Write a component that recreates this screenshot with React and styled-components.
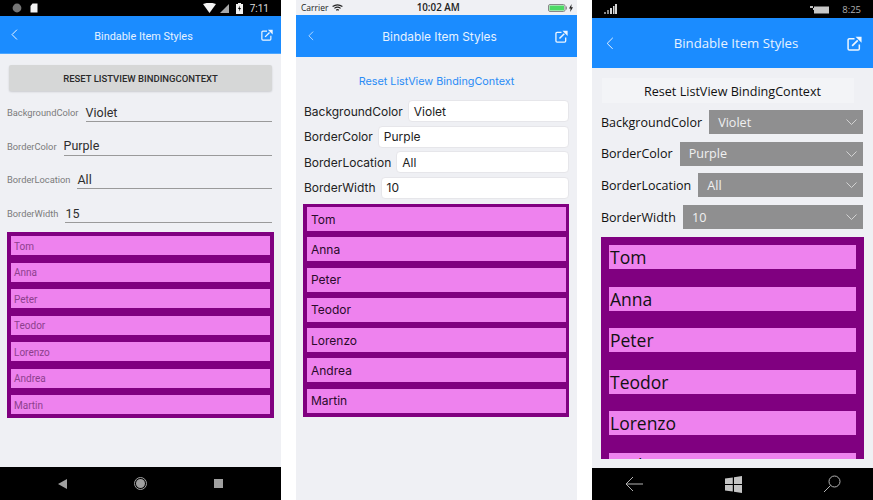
import styled, { createGlobalStyle } from 'styled-components';

const names = ['Tom', 'Anna', 'Peter', 'Teodor', 'Lorenzo', 'Andrea', 'Martin'];

const GlobalStyle = createGlobalStyle`
    html, body {
        margin: 0;
        padding: 0;
        background: #fff;
        overflow: hidden;
    }
`

const BackIcon = ({ size, weight }) => (
    <svg width={size} height={size * 1.6} viewBox="0 0 10 16" fill="none" stroke="#f0f7ff" strokeWidth={weight}>
        <path d="M8.5 1 L1.5 8 L8.5 15" />
    </svg>
);

const ShareIcon = ({ size }) => (
    <svg width={size} height={size} viewBox="0 0 14 14" fill="none">
        <path d="M7 2.5 H2.2 A1.2 1.2 0 0 0 1 3.7 V11.8 A1.2 1.2 0 0 0 2.2 13 H10.3 A1.2 1.2 0 0 0 11.5 11.8 V8" stroke="#eef6ff" strokeWidth="1.4" />
        <path d="M4.8 9.2 L10 4" stroke="#eef6ff" strokeWidth="1.6" />
        <path d="M8 .8 H13.6 V6.4 Z" fill="#eef6ff" />
    </svg>
);

const Chevron = () => (
    <svg width="11" height="6" viewBox="0 0 11 6" fill="none" stroke="#d2d2d2" strokeWidth="1">
        <path d="M.5 .5 L5.5 5.5 L10.5 .5" />
    </svg>
);

const AndroidStatus = () => (
    <StatusBar height={16} background="#000" color="#dcdcdc" size={9.5} pad="0 12px">
        <StatusGroup gap={8}>
            <svg width="10" height="10" viewBox="0 0 10 10"><circle cx="5" cy="5" r="4.4" fill="#757575" /></svg>
            <svg width="8" height="10" viewBox="0 0 8 10"><path d="M2.5 .5 H7.5 V9.5 H.5 V3 Z" fill="#f2f2f2" /></svg>
        </StatusGroup>
        <StatusGroup gap={4}>
            <svg width="13" height="10" viewBox="0 0 13 10"><path d="M0 1 Q6.5 -1.5 13 1 L6.5 10 Z" fill="#f4f4f4" /></svg>
            <svg width="9" height="9" viewBox="0 0 9 9"><path d="M9 0 V9 H0 Z" fill="#a8a8a8" /></svg>
            <BatteryIcon width="7" height="11" viewBox="0 0 7 11">
                <path d="M2 0 H5 V1 H7 V11 H0 V1 H2 Z" fill="#f2f2f2" />
                <path d="M4 2.5 L2 6 H3.4 L3 8.5 L5 5 H3.6 Z" fill="#000" />
            </BatteryIcon>
            <StatusTime>7:11</StatusTime>
        </StatusGroup>
    </StatusBar>
);

const IosStatus = () => (
    <StatusBar height={15} background="#eff0f4" color="#222" size={8.5} pad="0 4px 0 5px">
        <StatusGroup gap={4}>
            Carrier
            <svg width="11" height="8" viewBox="0 0 11 8" fill="none" stroke="#222" strokeWidth="1.2">
                <path d="M.6 2.6 Q5.5 -1 10.4 2.6" />
                <path d="M2.4 4.4 Q5.5 2 8.6 4.4" />
                <path d="M4.2 6.2 Q5.5 5.2 6.8 6.2" />
            </svg>
        </StatusGroup>
        <IosClock>10:02 AM</IosClock>
        <StatusGroup gap={2}>
            <svg width="19" height="8" viewBox="0 0 19 8">
                <rect x=".5" y=".5" width="16.5" height="7" rx="1.5" fill="none" stroke="#888" />
                <rect x="1.5" y="1.5" width="14.5" height="5" fill="#4cd964" />
                <rect x="17.7" y="2.5" width="1.2" height="3" fill="#888" />
            </svg>
            <svg width="4" height="8" viewBox="0 0 4 8"><path d="M2.6 0 L0 4.5 H1.6 L1.2 8 L4 3.3 H2.3 Z" fill="#222" /></svg>
        </StatusGroup>
    </StatusBar>
);

const WinStatus = () => (
    <StatusBar height={18} background="#000" color="#b0b0b0" size={9.5} pad="0 12px">
        <svg width="13" height="10" viewBox="0 0 13 10">
            <path d="M0 8 H2 V10 H0 Z M3 6 H5 V10 H3 Z" fill="#888" />
            <path d="M6 4 H8 V10 H6 Z M9 2 H10.5 V10 H9 Z M11 0 H13 V10 H11 Z" fill="#d8d8d8" />
        </svg>
        <StatusGroup gap={13}>
            <svg width="19" height="9" viewBox="0 0 19 9">
                <path d="M0 1 H3 V3 H5 V5 H3 V3 H0 Z" fill="#bdbdbd" />
                <rect x="4" y="1.5" width="15" height="7" fill="#c8c8c8" />
            </svg>
            8:25
        </StatusGroup>
    </StatusBar>
);

const ListRows = ({ kind }) => (
    <ListBox kind={kind}>
        {names.map(name => <ListRow key={name} kind={kind}>{name}</ListRow>)}
    </ListBox>
);

const AndroidPhone = () => (
    <Phone>
        <AndroidStatus />
        <Header height={38} kind="android">
            <BackIcon size={7} weight={1.4} />
            <Title kind="android">Bindable Item Styles</Title>
            <ShareIcon size={12} />
        </Header>
        <Body>
            <RaisedButton>RESET LISTVIEW BINDINGCONTEXT</RaisedButton>
            <AndroidForm>
                {[['BackgroundColor', 'Violet'], ['BorderColor', 'Purple'], ['BorderLocation', 'All'], ['BorderWidth', '15']].map(([label, value]) => (
                    <AndroidRow key={label}>
                        <AndroidLabel>{label}</AndroidLabel>
                        <AndroidValue>{value}</AndroidValue>
                    </AndroidRow>
                ))}
            </AndroidForm>
            <ListRows kind="android" />
        </Body>
        <NavBar height={33} gap={67}>
            <svg width="9" height="10" viewBox="0 0 9 10"><path d="M9 0 V10 L0 5 Z" fill="#a0a0a0" /></svg>
            <svg width="13" height="13" viewBox="0 0 13 13">
                <circle cx="6.5" cy="6.5" r="6" fill="none" stroke="#a0a0a0" />
                <circle cx="6.5" cy="6.5" r="4.5" fill="#a0a0a0" />
            </svg>
            <svg width="9" height="9" viewBox="0 0 9 9"><rect width="9" height="9" fill="#a0a0a0" /></svg>
        </NavBar>
    </Phone>
);

const IosPhone = () => (
    <Phone>
        <IosStatus />
        <Header height={42} kind="ios">
            <BackIcon size={6} weight={1.2} />
            <Title kind="ios">Bindable Item Styles</Title>
            <ShareIcon size={13} />
        </Header>
        <Body>
            <LinkButton>Reset ListView BindingContext</LinkButton>
            <IosForm>
                {[['BackgroundColor', 'Violet'], ['BorderColor', 'Purple'], ['BorderLocation', 'All'], ['BorderWidth', '10']].map(([label, value]) => (
                    <IosRow key={label}>
                        <IosLabel>{label}</IosLabel>
                        <IosField>{value}</IosField>
                    </IosRow>
                ))}
            </IosForm>
            <ListRows kind="ios" />
        </Body>
    </Phone>
);

const WinPhone = () => (
    <Phone>
        <WinStatus />
        <Header height={50} kind="win">
            <BackIcon size={8} weight={1.2} />
            <Title kind="win">Bindable Item Styles</Title>
            <ShareIcon size={15} />
        </Header>
        <Body>
            <FlatButton>Reset ListView BindingContext</FlatButton>
            <WinForm>
                {[['BackgroundColor', 'Violet'], ['BorderColor', 'Purple'], ['BorderLocation', 'All'], ['BorderWidth', '10']].map(([label, value]) => (
                    <WinRow key={label}>
                        <WinLabel>{label}</WinLabel>
                        <WinSelect>
                            {value}
                            <Chevron />
                        </WinSelect>
                    </WinRow>
                ))}
            </WinForm>
            <ListRows kind="win" />
        </Body>
        <NavBar height={32} gap={81}>
            <svg width="19" height="16" viewBox="0 0 19 16" fill="none" stroke="#b4b4b4" strokeWidth="1">
                <path d="M18 8 H1 M8 1 L1 8 L8 15" />
            </svg>
            <svg width="17" height="17" viewBox="0 0 17 17">
                <path d="M0 2.6 L7.8 1.4 V8 H0 Z M9 1.2 L17 0 V8 H9 Z M0 9 H7.8 V15.6 L0 14.4 Z M9 9 H17 V17 L9 15.8 Z" fill="#c4c4c4" />
            </svg>
            <svg width="18" height="18" viewBox="0 0 18 18" fill="none" stroke="#b4b4b4" strokeWidth="1">
                <circle cx="11.5" cy="6.5" r="5.5" />
                <path d="M7.5 10.5 L1 17" />
            </svg>
        </NavBar>
    </Phone>
);

const App = () => {
    return (
        <Wrapper>
            <GlobalStyle />
            <AndroidPhone />
            <IosPhone />
            <WinPhone />
        </Wrapper>
    )
}

const Wrapper = styled.div`
    width: 873px;
    height: 500px;
    display: flex;
    gap: 15px;
    background: #fff;
    overflow: hidden;
`

const Phone = styled.div`
    width: 281px;
    height: 500px;
    display: flex;
    flex-direction: column;
    background: #eff0f4;
`

const StatusBar = styled.div`
    height: ${props => props.height}px;
    flex: none;
    display: flex;
    align-items: center;
    justify-content: space-between;
    padding: ${props => props.pad};
    background: ${props => props.background};
    color: ${props => props.color};
    font: ${props => props.size}px "Open Sans", sans-serif;
`

const StatusGroup = styled.div`
    display: flex;
    align-items: center;
    gap: ${props => props.gap}px;
`

const BatteryIcon = styled.svg`
    margin-left: 3px;
`

const StatusTime = styled.span`
    margin-left: 3px;
    font: 10px Roboto, sans-serif;
`

const IosClock = styled.span`
    font-size: 9.8px;
    font-weight: 600;
    margin-left: -15px;
`

const headerPad = {
    android: { pad: '0 8px 0 11px', shift: 8, drop: 3 },
    ios: { pad: '0 9px 0 12px', shift: 10, drop: 0 },
    win: { pad: '0 11px 0 14px', shift: 11, drop: 0 },
};

const Header = styled.div`
    height: ${props => props.height}px;
    flex: none;
    box-sizing: border-box;
    display: flex;
    align-items: center;
    padding: ${props => headerPad[props.kind].pad};
    background: #1b8cff;
    border-bottom: ${props => props.kind === 'android' ? '1px solid #4ba6ff' : 'none'};
`

const titleFonts = {
    android: 'Roboto',
    ios: 'Inter',
    win: '"Open Sans"',
};

const titleSizes = {
    android: '10.9px',
    ios: '11.9px',
    win: '13.2px',
};

const Title = styled.div`
    flex: 1;
    text-align: center;
    padding-left: ${props => headerPad[props.kind].shift}px;
    padding-top: ${props => headerPad[props.kind].drop}px;
    color: #e6f2ff;
    font-family: ${props => titleFonts[props.kind]}, sans-serif;
    font-size: ${props => titleSizes[props.kind]};
`

const Body = styled.div`
    flex: 1;
    min-height: 0;
    display: flex;
    flex-direction: column;
`

const RaisedButton = styled.div`
    height: 26px;
    flex: none;
    margin: 11px 9px 0;
    display: flex;
    align-items: center;
    justify-content: center;
    background: #d6d7d7;
    border-radius: 2px;
    box-shadow: 0 1px 2px rgba(0, 0, 0, 0.15);
    color: #2a2a2a;
    font: 500 9.5px Roboto, sans-serif;
`

const AndroidForm = styled.div`
    margin: 7px 9px 0 7px;
    display: flex;
    flex-direction: column;
    gap: 9.7px;
`

const AndroidRow = styled.div`
    height: 24px;
    display: flex;
    align-items: stretch;
    gap: 7px;
`

const AndroidLabel = styled.div`
    display: flex;
    align-items: center;
    padding-top: 5px;
    color: #7b7b7b;
    font: 9.3px Roboto, sans-serif;
`

const AndroidValue = styled.div`
    flex: 1;
    display: flex;
    align-items: center;
    padding-top: 5px;
    border-bottom: 1px solid #9a9a9a;
    color: #2e2e2e;
    font: 12.5px Roboto, sans-serif;
`

const LinkButton = styled.div`
    height: 22px;
    flex: none;
    margin-top: 13px;
    display: flex;
    align-items: center;
    justify-content: center;
    color: #2a8cf6;
    font: 10.8px Inter, sans-serif;
`

const IosForm = styled.div`
    margin: 8px 8px 0;
    display: flex;
    flex-direction: column;
    gap: 3.5px;
`

const IosRow = styled.div`
    height: 22px;
    display: flex;
    align-items: center;
    gap: 5px;
`

const IosLabel = styled.div`
    color: #222;
    font: 12px Inter, sans-serif;
`

const IosField = styled.div`
    flex: 1;
    height: 100%;
    box-sizing: border-box;
    display: flex;
    align-items: center;
    padding-left: 5px;
    background: #fff;
    border: 1px solid #e6e6ea;
    border-radius: 4px;
    color: #222;
    font: 12px Inter, sans-serif;
`

const FlatButton = styled.div`
    height: 25px;
    flex: none;
    margin: 10px 19px 0 10px;
    padding: 1px 0 0 9px;
    box-sizing: border-box;
    display: flex;
    align-items: center;
    justify-content: center;
    background: #f3f4f7;
    color: #111;
    font: 12.6px "Open Sans", sans-serif;
`

const WinForm = styled.div`
    margin: 7px 10px 0 9px;
    display: flex;
    flex-direction: column;
    gap: 7.7px;
`

const WinRow = styled.div`
    height: 24px;
    display: flex;
    align-items: center;
    gap: 7px;
`

const WinLabel = styled.div`
    color: #111;
    font: 12.5px "Open Sans", sans-serif;
`

const WinSelect = styled.div`
    flex: 1;
    height: 100%;
    display: flex;
    align-items: center;
    justify-content: space-between;
    padding: 0 6px 0 9px;
    background: #8f8f90;
    color: #f0f0f0;
    font: 12.6px "Open Sans", sans-serif;
`

const listLayout = {
    android: { margin: '9px 7px 0', height: 186, padding: '4px', gap: 7.5 },
    ios: { margin: '5.5px 8px 0 7px', height: 213, padding: '3px 3px 4px 4px', gap: 6.3 },
    win: { margin: '8px 9px 0', height: 222, padding: '8px', gap: 17.6 },
};

const ListBox = styled.div`
    box-sizing: border-box;
    flex: none;
    overflow: hidden;
    display: flex;
    flex-direction: column;
    margin: ${props => listLayout[props.kind].margin};
    height: ${props => listLayout[props.kind].height}px;
    padding: ${props => listLayout[props.kind].padding};
    gap: ${props => listLayout[props.kind].gap}px;
    background: #800080;
`

const rowFonts = {
    android: { size: '10px', height: 19, pad: '3px', top: '1px', color: '#8d3f8d', family: 'Roboto' },
    ios: { size: '12px', height: 24, pad: '4px', top: '0', color: '#2a0a2a', family: 'Inter' },
    win: { size: '17.5px', height: 24, pad: '1px', top: '0', color: '#111', family: '"Open Sans"' },
};

const ListRow = styled.div`
    flex: none;
    box-sizing: border-box;
    display: flex;
    align-items: center;
    height: ${props => rowFonts[props.kind].height}px;
    padding-left: ${props => rowFonts[props.kind].pad};
    padding-top: ${props => rowFonts[props.kind].top};
    background: #ee82ee;
    color: ${props => rowFonts[props.kind].color};
    font: ${props => rowFonts[props.kind].size} ${props => rowFonts[props.kind].family}, sans-serif;
    white-space: nowrap;
`

const NavBar = styled.div`
    height: ${props => props.height}px;
    flex: none;
    display: flex;
    align-items: center;
    justify-content: center;
    gap: ${props => props.gap}px;
    background: #000;
`

export default App;
